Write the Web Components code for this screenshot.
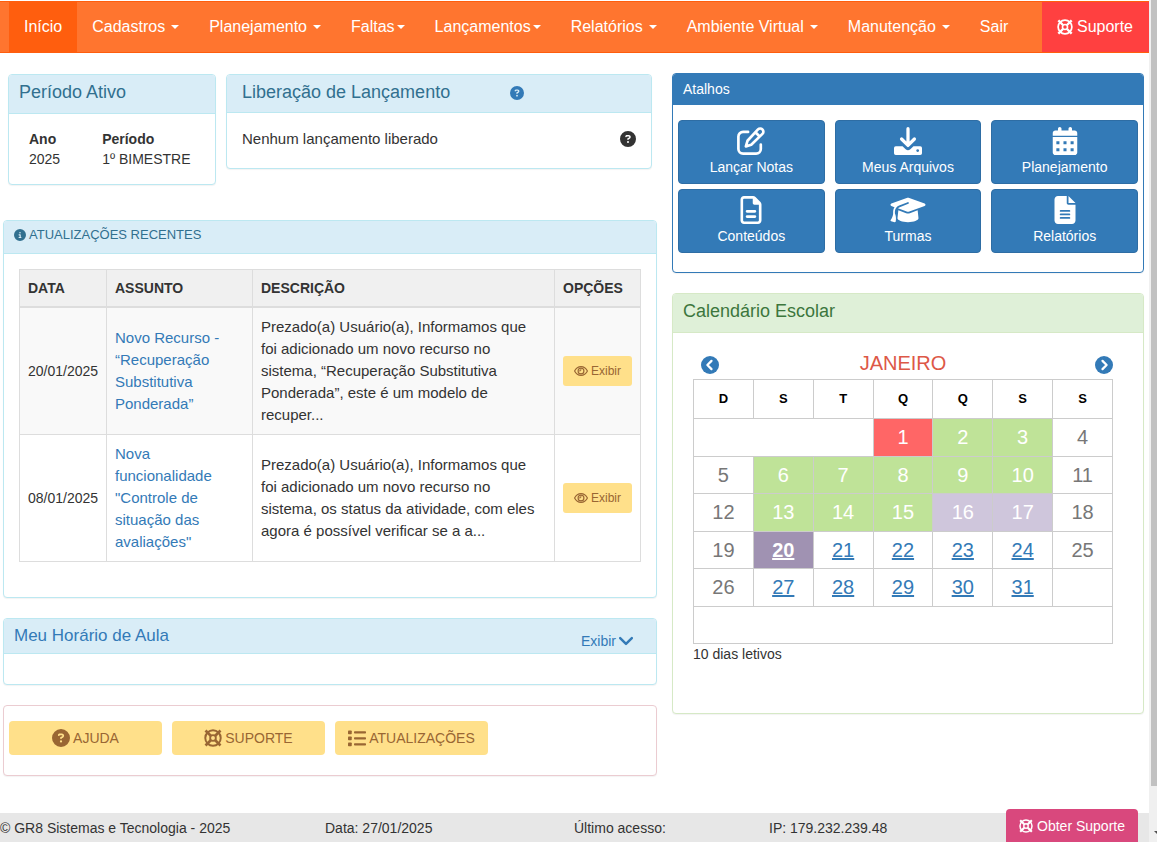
<!DOCTYPE html>
<html lang="pt-BR">
<head>
<meta charset="utf-8">
<meta name="viewport" content="width=device-width, initial-scale=1">
<title>GR8 Sistemas - Início</title>
<style>
  html, body { margin: 0; height: 100%; }
  body { font: 14px/20px "Liberation Sans", Arial, sans-serif; color: #333; background: #fff; overflow: hidden; }
</style>
</head>
<body>
<school-portal></school-portal>

<script>
const define = (name, html, setup) => {
  const template = document.createElement('template');
  template.innerHTML = html;
  customElements.define(name, class extends HTMLElement {
    constructor() {
      super();
      this.attachShadow({ mode: 'open' }).append(template.content.cloneNode(true));
    }
    connectedCallback() { if (setup) setup(this, this.shadowRoot); }
  });
};

/* ---------- icons ---------- */
const fill = (w, d, h = 512) => `<svg viewBox="0 0 ${w} ${h}" fill="currentColor" fill-rule="evenodd" aria-hidden="true"><path d="${d}"/></svg>`;
const line = (w, body) => `<svg viewBox="0 0 24 24" fill="none" stroke="currentColor" stroke-width="${w}" stroke-linecap="round" stroke-linejoin="round" aria-hidden="true">${body}</svg>`;
const disc = 'M256 512A256 256 0 1 0 256 0a256 256 0 1 0 0 512z';
const ICONS = {
  question: fill(512, disc + 'M169.8 165.3c7.9-22.3 29.1-37.3 52.8-37.3h58.3c34.9 0 63.1 28.3 63.1 63.1c0 22.6-12.1 43.5-31.7 54.8L280 264.4c-.2 13-10.9 23.6-24 23.6c-13.3 0-24-10.7-24-24V250.5c0-8.6 4.6-16.5 12.1-20.8l44.3-25.4c4.7-2.7 7.6-7.7 7.6-13.1c0-8.4-6.8-15.1-15.1-15.1H222.6c-3.4 0-6.4 2.1-7.5 5.3l-.4 1.2c-4.4 12.5-18.2 19-30.6 14.6s-19-18.2-14.6-30.6l.4-1.2zM224 352a32 32 0 1 1 64 0 32 32 0 1 1 -64 0z'),
  info: fill(512, disc + 'M216 336h24V272H216c-13.3 0-24-10.7-24-24s10.7-24 24-24h48c13.3 0 24 10.7 24 24v88h8c13.3 0 24 10.7 24 24s-10.7 24-24 24H216c-13.3 0-24-10.7-24-24s10.7-24 24-24zm40-208a32 32 0 1 1 0 64 32 32 0 1 1 0-64z'),
  prev: `<svg viewBox="0 0 24 24" aria-hidden="true"><circle cx="12" cy="12" r="12" fill="currentColor"/><path d="M14 6.500L8.500 12l5.500 5.500" fill="none" stroke="#fff" stroke-width="3" stroke-linecap="round" stroke-linejoin="round"/></svg>`,
  next: `<svg viewBox="0 0 24 24" aria-hidden="true"><circle cx="12" cy="12" r="12" fill="currentColor"/><path d="M10 6.500l5.500 5.500-5.500 5.500" fill="none" stroke="#fff" stroke-width="3" stroke-linecap="round" stroke-linejoin="round"/></svg>`,
  cap: fill(640, 'M320 32c-8.1 0-16.1 1.4-23.7 4.1L15.8 137.4C6.3 140.9 0 149.9 0 160s6.3 19.1 15.8 22.6l57.9 20.9C57.3 229.3 48 259.8 48 291.9v28.1c0 28.4-10.8 57.7-22.3 80.8c-6.5 13-13.9 25.8-22.5 37.6C0 442.7-.9 448.3 .9 453.4s6 8.9 11.2 10.2l64 16c4.2 1.1 8.7 .3 12.4-2s6.3-6.1 7.1-10.4c8.6-42.8 4.3-81.2-2.1-108.7C90.3 344.3 86 329.8 80 316.5V291.9c0-30.2 10.2-58.7 27.9-81.5c12.9-15.5 29.6-28 49.2-35.7l157-61.7c8.2-3.2 17.5 .8 20.7 9s-.8 17.5-9 20.7l-157 61.7c-12.4 4.9-23.3 12.4-32.2 21.6l159.6 57.6c7.6 2.7 15.6 4.1 23.7 4.1s16.1-1.4 23.7-4.1L624.2 182.6c9.5-3.4 15.8-12.5 15.8-22.6s-6.3-19.1-15.8-22.6L343.7 36.1C336.1 33.4 328.1 32 320 32zM128 408c0 35.3 86 72 192 72s192-36.7 192-72L496.7 262.6 354.5 314c-11.1 4-22.8 6-34.5 6s-23.5-2-34.5-6L143.3 262.6 128 408z'),
  calendar: fill(448, 'M128 0c17.7 0 32 14.3 32 32V64H288V32c0-17.7 14.3-32 32-32s32 14.3 32 32V64h48c26.5 0 48 21.5 48 48v48H0V112C0 85.5 21.5 64 48 64H96V32c0-17.7 14.3-32 32-32zM0 184H448V464c0 26.5-21.5 48-48 48H48c-26.5 0-48-21.5-48-48V184zM66 260h56v56H66zM196 260h56v56h-56zM326 260h56v56h-56zM66 388h56v56H66zM196 388h56v56h-56zM326 388h56v56h-56z'),
  file: fill(384, 'M64 464c-8.8 0-16-7.2-16-16V64c0-8.8 7.2-16 16-16H224v80c0 17.7 14.3 32 32 32h80V448c0 8.8-7.2 16-16 16H64zM64 0C28.7 0 0 28.7 0 64V448c0 35.3 28.7 64 64 64H320c35.3 0 64-28.7 64-64V154.5c0-17-6.7-33.3-18.7-45.3L274.7 18.7C262.7 6.7 246.5 0 229.5 0H64zm56 256c-13.3 0-24 10.7-24 24s10.7 24 24 24H264c13.3 0 24-10.7 24-24s-10.7-24-24-24H120zm0 96c-13.3 0-24 10.7-24 24s10.7 24 24 24H264c13.3 0 24-10.7 24-24s-10.7-24-24-24H120z'),
  report: fill(384, 'M64 0C28.7 0 0 28.7 0 64V448c0 35.3 28.7 64 64 64H320c35.3 0 64-28.7 64-64V160H256c-17.7 0-32-14.3-32-32V0H64zM256 0V128H384L256 0zM112 256H272a16 16 0 0 1 0 32H112a16 16 0 0 1 0-32zM112 320H272a16 16 0 0 1 0 32H112a16 16 0 0 1 0-32zM112 384H272a16 16 0 0 1 0 32H112a16 16 0 0 1 0-32z'),
  edit: line(2.3, '<path d="M9.500 4.200H5.200a4 4 0 0 0-4 4v10.600a4 4 0 0 0 4 4h11.200a4 4 0 0 0 4-4V15"/><path d="M18 2.100a2.600 2.600 0 0 1 3.800 0a2.600 2.600 0 0 1 0 3.800L12.200 15.200l-4.600 1.400L9 11.800zM15.800 4.500l3.600 3.600"/>'),
  download: `<svg viewBox="0 0 24 24" aria-hidden="true"><path d="M12 1.400v14M6.500 10.300l5.500 5.500 5.500-5.500" fill="none" stroke="currentColor" stroke-width="2.800" stroke-linecap="round" stroke-linejoin="round"/><path fill="currentColor" fill-rule="evenodd" d="M1.500 16.500h5.800l2.700 2.600q2 1.600 4 0l2.700-2.600h5.800q1.500 0 1.500 1.500v4.500q0 1.500-1.500 1.500h-21q-1.500 0-1.500-1.500V18q0-1.500 1.500-1.500zM20.300 19a1.200 1.200 0 1 0 .01 0z"/></svg>`,
  ring: `<svg viewBox="0 0 24 24" fill="none" stroke="currentColor" aria-hidden="true"><circle cx="12" cy="12" r="10.300" stroke-width="2.600"/><circle cx="12" cy="12" r="3.800" stroke-width="2.400"/><path stroke-width="3.600" d="M2 2l7 7M22 2l-7 7M2 22l7-7M22 22l-7-7"/></svg>`,
  list: `<svg viewBox="0 0 24 24" fill="currentColor" aria-hidden="true"><rect x="0" y="2" width="5" height="5" rx="1"/><rect x="0" y="10" width="5" height="5" rx="1"/><rect x="0" y="18" width="5" height="5" rx="1"/><rect x="8" y="3" width="16" height="3" rx="1"/><rect x="8" y="11" width="16" height="3" rx="1"/><rect x="8" y="19" width="16" height="3" rx="1"/></svg>`,
  eye: line(2, '<path d="M1 12C3.500 7 7.500 4.500 12 4.500S20.500 7 23 12c-2.500 5-6.500 7.500-11 7.500S3.500 17 1 12z"/><circle cx="12" cy="12" r="5"/><path d="M10 12a2 2 0 0 1 2-2"/>'),
  chevron: line(4.2, '<path d="M2 7l10 10L22 7"/>')
};
define('app-icon', `<style>
  :host { display: inline-block; width: 16px; height: 16px; flex: none; vertical-align: -2px; }
  svg { display: block; width: 100%; height: 100%; }
</style>`, (el, root) => {
  if (!root.querySelector('svg')) root.innerHTML += ICONS[el.getAttribute('name')] || '';
});

/* ---------- top navigation ---------- */
define('nav-item', `<style>
  :host { display: block; white-space: nowrap; }
  a { display: flex; align-items: center; padding: 15px; color: #fff; text-decoration: none; font-size: 16px; line-height: 20px; white-space: pre; }
  :host([active]) a { background: #ff5e0e; }
  :host([support]) a { background: #ff4040; gap: 4px; padding: 15px 16px 15px 15px; }
  i { display: none; margin-left: 2px; border: 4px solid transparent; border-top-color: #fff; border-bottom: 0; }
  :host([menu]) i { display: block; }
  :host([menu=spaced]) i { margin-left: 6px; }
</style><a href="#"><slot></slot><i></i></a>`);

define('top-nav', `<style>
  :host { display: block; margin-top: 1px; background: #ff752f; border: solid #ff5e0e; border-width: 1px 0; }
  nav { display: flex; padding-left: 9px; }
  [support] { margin-left: auto; }
</style>
<nav aria-label="Principal">
  <nav-item active>Início</nav-item>
  <nav-item menu="spaced">Cadastros</nav-item>
  <nav-item menu="spaced">Planejamento</nav-item>
  <nav-item menu>Faltas</nav-item>
  <nav-item menu>Lançamentos</nav-item>
  <nav-item menu="spaced">Relatórios</nav-item>
  <nav-item menu="spaced">Ambiente Virtual</nav-item>
  <nav-item menu="spaced">Manutenção</nav-item>
  <nav-item>Sair</nav-item>
  <nav-item support><app-icon name="ring"></app-icon>Suporte</nav-item>
</nav>`);

/* ---------- panel ---------- */
define('app-panel', `<style>
  :host { display: block; box-sizing: border-box; background: #fff; border: 1px solid var(--line, #bce8f1); border-radius: 4px; box-shadow: 0 1px 1px rgba(0,0,0,.05); }
  header { display: flex; align-items: center; box-sizing: border-box; height: var(--head, 39px); padding: 0 10px var(--head-pad, 4px); border-bottom: 1px solid var(--line, #bce8f1); border-radius: 3px 3px 0 0; background: #d9edf7; color: #31708f; }
  :host([tone=primary]) { --line: #337ab7; }
  :host([tone=primary]) header { background: #337ab7; color: #fff; padding-bottom: 0; }
  :host([tone=success]) { --line: #d6e9c6; }
  :host([tone=success]) header { background: #dff0d8; color: #3c763d; }
  :host([tone=plain]) { --line: #ebccd1; }
  :host([tone=plain]) header { display: none; }
</style>
<header><slot name="head"></slot></header><slot></slot>`);

/* ---------- yellow buttons ---------- */
define('action-button', `<style>
  :host { display: block; }
  button { display: flex; align-items: center; justify-content: center; gap: 3px; box-sizing: border-box; width: 100%; height: 34px; padding: 0; border: 0; border-radius: 4px; background: #ffe08a; color: #996633; font: 14px/20px "Liberation Sans", Arial, sans-serif; cursor: pointer; }
  app-icon { width: 18px; height: 18px; }
  :host([small]) button { height: 30px; font-size: 12px; border-radius: 3px; }
  :host([small]) app-icon { width: 14px; height: 14px; }
</style><button type="button"><app-icon></app-icon><span><slot></slot></span></button>`, (el, root) => {
  const icon = document.createElement('app-icon');
  icon.setAttribute('name', el.getAttribute('icon'));
  root.querySelector('app-icon').replaceWith(icon);
});

/* ---------- recent updates ---------- */
define('updates-table', `<style>
  :host { display: block; padding: 15px 15px 35px; }
  table { width: 100%; table-layout: fixed; border-collapse: collapse; }
  th, td { border: 1px solid #ddd; padding: 8px; text-align: left; vertical-align: middle; }
  th { background: #f0f0f0; border-bottom-width: 2px; font-size: 14px; line-height: 20px; height: 20px; }
  td { font-size: 15px; line-height: 22px; }
  td:nth-child(1) { font-size: 14px; white-space: nowrap; }
  td:nth-child(3) { padding-right: 12px; }
  tbody tr:first-child td { background: #f9f9f9; }
  .date { width: 70px; }
  .opts { width: 69px; }
  .subject { width: 129px; }
  a { color: #337ab7; text-decoration: none; }
</style>
<table>
  <thead><tr><th class="date">DATA</th><th class="subject">ASSUNTO</th><th>DESCRIÇÃO</th><th class="opts">OPÇÕES</th></tr></thead>
  <tbody>
    <tr><td>20/01/2025</td><td><a href="#">Novo Recurso - “Recuperação Substitutiva Ponderada”</a></td>
      <td>Prezado(a) Usuário(a), Informamos que foi adicionado um novo recurso no sistema, “Recuperação Substitutiva Ponderada”, este é um modelo de recuper...</td>
      <td><action-button small icon="eye">Exibir</action-button></td></tr>
    <tr><td>08/01/2025</td><td><a href="#">Nova funcionalidade "Controle de situação das avaliações"</a></td>
      <td>Prezado(a) Usuário(a), Informamos que foi adicionado um novo recurso no sistema, os status da atividade, com eles agora é possível verificar se a a...</td>
      <td><action-button small icon="eye">Exibir</action-button></td></tr>
  </tbody>
</table>`);

/* ---------- shortcuts ---------- */
define('shortcut-tile', `<style>
  :host { display: block; }
  a { display: flex; flex-direction: column; align-items: center; box-sizing: border-box; height: 100%; padding: 6px 0 5px; border: 1px solid #2e6da4; border-radius: 4px; background: #337ab7; color: #fff; text-decoration: none; line-height: 20px; }
  app-icon { width: 36px; height: 28px; margin-bottom: 2px; }
</style><a href="#"><app-icon></app-icon><span><slot></slot></span></a>`, (el, root) => {
  const icon = document.createElement('app-icon');
  icon.setAttribute('name', el.getAttribute('icon'));
  root.querySelector('app-icon').replaceWith(icon);
});

/* ---------- school calendar ---------- */
define('school-calendar', `<style>
  :host { display: block; padding: 19px 30px 49px 20px; }
  .bar { display: grid; grid-template-columns: 1fr auto 1fr; align-items: start; height: 27px; }
  h3 { margin: 0; font-size: 20px; line-height: 22px; font-weight: 400; color: #dd5847; }
  button { display: block; margin: 4px 0 0 8px; padding: 0; border: 0; background: none; color: #337ab7; width: 18px; height: 18px; cursor: pointer; }
  button:last-child { justify-self: end; }
  .bar app-icon { display: block; width: 18px; height: 18px; }
  table { width: 100%; height: 265px; table-layout: fixed; border-collapse: collapse; text-align: center; }
  th, td { border: 1px solid #ccc; padding: 0; }
  th { height: 38px; font-size: 13px; line-height: 20px; color: #000; }
  td { height: 36px; font-size: 20px; line-height: 24px; color: #777; }
  a { color: #337ab7; }
  .holiday, .done, .plan, .today { color: #fff; }
  .holiday { background: #f66; }
  .done { background: #bfe398; }
  .plan { background: #cfc6dc; }
  .today { background: #a092b2; }
  .today a { color: #fff; font-weight: 700; }
  p { margin: 0; line-height: 20px; }
</style>
<div class="bar"><button type="button" aria-label="Mês anterior"><app-icon name="prev"></app-icon></button><h3>JANEIRO</h3><button type="button" aria-label="Próximo mês"><app-icon name="next"></app-icon></button></div>
<table><thead><tr></tr></thead><tbody></tbody></table>
<p>10 dias letivos</p>`, (el, root) => {
  root.querySelector('thead tr').innerHTML = [...'DSTQQSS'].map(d => `<th scope="col">${d}</th>`).join('');
  const kind = d => d === 1 ? 'holiday' : d === 20 ? 'today' : d === 16 || d === 17 ? 'plan'
    : [2, 3, 6, 7, 8, 9, 10, 13, 14, 15].includes(d) ? 'done' : '';
  let rows = '<tr><td colspan="3"></td>';
  for (let d = 1; d <= 31; d++) {
    const column = (d + 2) % 7;
    if (column === 0) rows += '</tr><tr>';
    const linked = d >= 20 && column > 0 && column < 6;
    rows += `<td class="${kind(d)}">${linked ? `<a href="#">${d}</a>` : d}</td>`;
  }
  root.querySelector('tbody').innerHTML = rows + '<td></td></tr><tr><td colspan="7"></td></tr>';
});

/* ---------- footer ---------- */
define('page-footer', `<style>
  :host { display: grid; grid-template-columns: 325fr 249fr 195fr 380fr; box-sizing: border-box; height: 29px; padding-top: 5px; background: #e7e7e7; line-height: 20px; white-space: nowrap; overflow: hidden; }
</style>
<span>© GR8 Sistemas e Tecnologia - 2025</span><span>Data: 27/01/2025</span><span>Último acesso:</span><span>IP: 179.232.239.48</span>`);

define('support-button', `<style>
  :host { position: absolute; right: 11px; bottom: 0; }
  button { display: flex; align-items: center; justify-content: center; gap: 4px; width: 132px; height: 33px; padding: 0; border: 0; border-radius: 4px 4px 0 0; background: #d9487d; color: #fff; font: 14px/20px "Liberation Sans", Arial, sans-serif; cursor: pointer; }
  app-icon { width: 14px; height: 14px; }
</style><button type="button"><app-icon name="ring"></app-icon><span>Obter Suporte</span></button>`);

define('scroll-rail', `<style>
  :host { display: flex; flex-direction: column; justify-content: space-between; box-sizing: border-box; padding: 0 0 7px 2px; background: #f0f0f0; overflow: hidden; }
  .thumb { height: 786px; background: #c1c1c1; }
  .arrow { width: 0; margin-left: 3px; border: 4px solid transparent; border-top-color: #505050; border-bottom: 0; }
</style><div class="thumb"></div><div class="arrow"></div>`);

/* ---------- page ---------- */
define('school-portal', `<style>
  :host { display: grid; grid-template-columns: minmax(0, 1fr) 8px; height: 100%; }
  .page { position: relative; display: flex; flex-direction: column; min-width: 0; overflow: hidden; }
  main { flex: 1; display: grid; grid-template-columns: minmax(0, 654fr) minmax(0, 472fr); gap: 15px; align-items: start; padding: 20px 5px 0 3px; }
  .column { display: grid; gap: 20px; }
  h2 { margin: 0; font-size: 18px; line-height: 20px; font-weight: 400; }
  h2.small { font-size: 14px; }
  h2.mid { font-size: 17px; }
  .status { display: grid; grid-template-columns: minmax(0, 208fr) minmax(0, 426fr); gap: 10px; align-items: start; padding: 1px 5px 15px; }
  dl { display: flex; gap: 42px; margin: 0; padding: 15px 20px; }
  dt { font-weight: 700; }
  dd { margin: 0; }
  .period { --head: 39px; }
  .release { --head: 38px; }
  .release h2 { margin-left: 5px; }
  .help { width: 14px; height: 14px; margin: 2px 0 0 60px; color: #337ab7; }
  .row { display: flex; align-items: center; justify-content: space-between; padding: 16px 15px 19px; font-size: 15px; }
  .updates { --head: 33px; --head-pad: 5px; }
  .updates h2 { display: flex; align-items: center; gap: 3px; font-size: 13px; }
  .updates h2 app-icon { width: 12px; height: 12px; }
  .schedule { --head: 35px; --head-pad: 0; }
  .schedule h2 { color: #337ab7; }
  .schedule a { display: flex; align-items: center; gap: 3px; margin: 10px 13px 0 auto; color: #337ab7; text-decoration: none; }
  .schedule a app-icon { width: 14px; height: 14px; }
  .empty { height: 30px; }
  .actions { display: grid; grid-template-columns: repeat(3, 153px); gap: 10px; padding: 15px 5px 20px; }
  .shortcuts { --head: 31px; }
  .tiles { display: grid; grid-template-columns: repeat(3, minmax(0, 1fr)); grid-auto-rows: minmax(64px, auto); gap: 5px 10px; padding: 15px 5px 19px; }
</style>
<div class="page">
  <top-nav></top-nav>
  <main>
    <div class="column">
      <div class="status">
        <app-panel class="period"><h2 slot="head">Período Ativo</h2>
          <dl><div><dt>Ano</dt><dd>2025</dd></div><div><dt>Período</dt><dd>1º BIMESTRE</dd></div></dl></app-panel>
        <app-panel class="release"><h2 slot="head">Liberação de Lançamento</h2><app-icon slot="head" class="help" name="question"></app-icon>
          <div class="row"><span>Nenhum lançamento liberado</span><app-icon name="question"></app-icon></div></app-panel>
      </div>
      <app-panel class="updates"><h2 slot="head"><app-icon name="info"></app-icon>ATUALIZAÇÕES RECENTES</h2><updates-table></updates-table></app-panel>
      <app-panel class="schedule"><h2 slot="head" class="mid">Meu Horário de Aula</h2><a slot="head" href="#">Exibir<app-icon name="chevron"></app-icon></a><div class="empty"></div></app-panel>
      <app-panel tone="plain"><div class="actions">
        <action-button icon="question">AJUDA</action-button><action-button icon="ring">SUPORTE</action-button><action-button icon="list">ATUALIZAÇÕES</action-button>
      </div></app-panel>
    </div>
    <div class="column">
      <app-panel class="shortcuts" tone="primary"><h2 slot="head" class="small">Atalhos</h2>
        <div class="tiles">
          <shortcut-tile icon="edit">Lançar Notas</shortcut-tile>
          <shortcut-tile icon="download">Meus Arquivos</shortcut-tile>
          <shortcut-tile icon="calendar">Planejamento</shortcut-tile>
          <shortcut-tile icon="file">Conteúdos</shortcut-tile>
          <shortcut-tile icon="cap">Turmas</shortcut-tile>
          <shortcut-tile icon="report">Relatórios</shortcut-tile>
        </div></app-panel>
      <app-panel tone="success"><h2 slot="head">Calendário Escolar</h2><school-calendar></school-calendar></app-panel>
    </div>
  </main>
  <page-footer></page-footer>
  <support-button></support-button>
</div>
<scroll-rail aria-hidden="true"></scroll-rail>`);
</script>
</body>
</html>
